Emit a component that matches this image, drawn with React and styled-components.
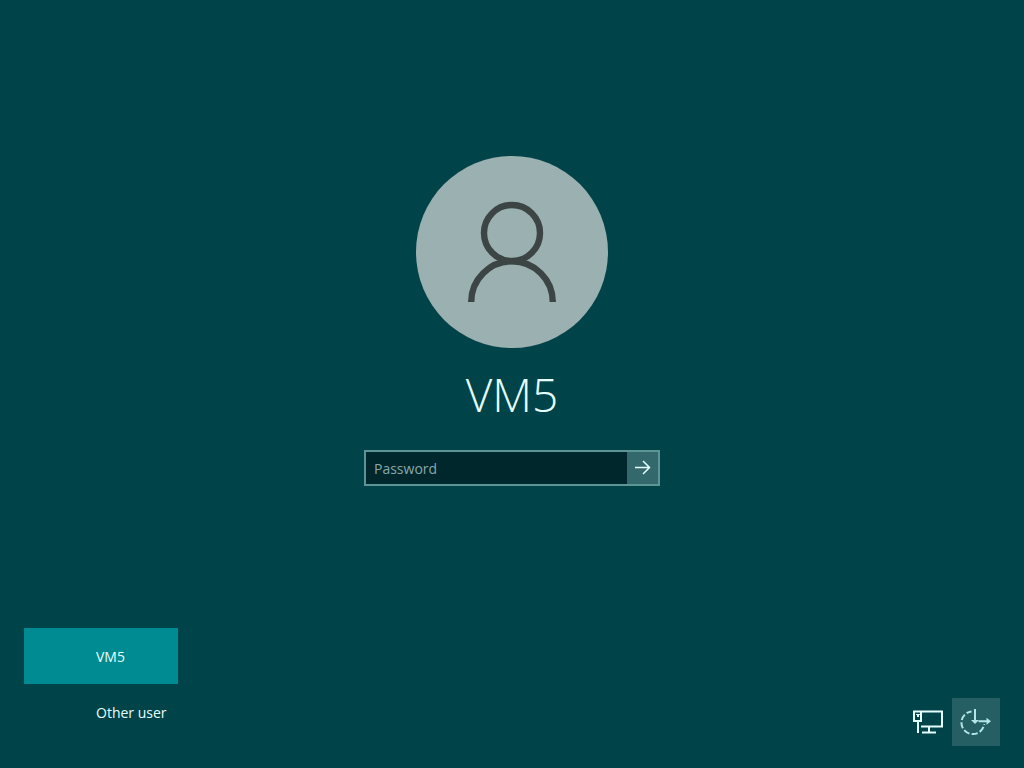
import React, { useState } from 'react';
import styled, { createGlobalStyle } from 'styled-components'

const users = ['VM5', 'Other user'];

export default function App() {
    const [current, setCurrent] = useState(users[0]);

    return (
        <Screen>
            <GlobalStyle />
            <SignIn>
                <Avatar>
                    <UserIcon />
                </Avatar>
                <UserName>{current}</UserName>
                <PasswordForm onSubmit={(e) => e.preventDefault()}>
                    <PasswordInput type="password" placeholder="Password" aria-label="Password" />
                    <SubmitButton type="submit" aria-label="Submit">
                        <ArrowIcon />
                    </SubmitButton>
                </PasswordForm>
            </SignIn>
            <Footer>
                <UserList>
                    {users.map((user) => (
                        <UserButton
                            key={user}
                            type="button"
                            $active={user === current}
                            onClick={() => setCurrent(user)}
                        >
                            {user}
                        </UserButton>
                    ))}
                </UserList>
                <Tray>
                    <TrayButton type="button" aria-label="Network">
                        <NetworkIcon />
                    </TrayButton>
                    <TrayButton type="button" aria-label="Ease of access" $active>
                        <EaseIcon />
                    </TrayButton>
                </Tray>
            </Footer>
        </Screen>
    )
}

const UserIcon = () => (
    <svg width="96" height="104" viewBox="0 0 96 104" fill="none" stroke="#3c4444" strokeWidth="6.4">
        <circle cx="48" cy="33" r="28" />
        <path d="M7.200 102A40.800 40.800 0 0 1 88.800 102" />
    </svg>
)

const ArrowIcon = () => (
    <svg width="18" height="18" viewBox="0 0 18 18" fill="none" stroke="#e6ffff" strokeWidth="1.500">
        <path d="M1 8.500H15.500M9 2L15.500 8.500L9 15" />
    </svg>
)

const NetworkIcon = () => (
    <svg width="32" height="32" viewBox="0 0 32 32" fill="none" stroke="#e6ffff" strokeWidth="2">
        <path d="M1 5.500H30V20.500H9" />
        <path d="M2 5V15H9V5M6 15V27" />
        <path d="M4 8H8V9H7V11H5V9H4Z" fill="#e6ffff" stroke="none" />
        <path d="M17 20.500V26M10 26.500H24" />
    </svg>
)

const EaseIcon = () => (
    <svg width="32" height="32" viewBox="0 0 32 32" fill="none" stroke="#b4e6e8" strokeWidth="2">
        <path d="M11.500 5.400A11.400 11.400 0 1 0 24.200 18" strokeDasharray="6.200 2.300" strokeDashoffset="1" />
        <path d="M15 3V15M18.500 15.300H29" />
        <path d="M11 14H19L15 18ZM26.500 11.800V18.800L31 15.300Z" fill="#b4e6e8" stroke="none" />
    </svg>
)

const GlobalStyle = createGlobalStyle`
    *{
        box-sizing:border-box;
    }
    body{
        margin:0;
        background:#004348;
        font-family:"Open Sans", "Noto Sans", sans-serif;
    }
    button, input{
        font-family:inherit;
        border:0;
        border-radius:0;
    }
    svg{
        display:block;
    }
`;
const Screen = styled.div`
    min-height:100vh;
    display:flex;
    flex-direction:column;
    color:#fff;
`;
const SignIn = styled.main`
    flex:1;
    display:flex;
    flex-direction:column;
    align-items:center;
    padding:156px 24px 24px;
`;
const Avatar = styled.div`
    width:192px;
    height:192px;
    display:flex;
    align-items:center;
    justify-content:center;
    border-radius:50%;
    background:#9bb0b1;
`;
const UserName = styled.h1`
    margin:14px 0 24px;
    font-size:46px;
    line-height:64px;
    font-weight:300;
    color:#e6ffff;
`;
const PasswordForm = styled.form`
    display:flex;
    width:100%;
    max-width:296px;
    height:36px;
    border:2px solid #5d9596;
`;
const PasswordInput = styled.input`
    flex:1;
    min-width:0;
    padding:0 8px;
    background:#00272b;
    color:#fff;
    font-size:14px;
    outline:none;
    &::placeholder{
        color:#87a9ab;
        opacity:1;
    }
`;
const SubmitButton = styled.button`
    width:31px;
    padding:0;
    display:flex;
    align-items:center;
    justify-content:center;
    background:#33696d;
`;
const Footer = styled.footer`
    display:flex;
    align-items:flex-end;
    justify-content:space-between;
    padding:0 24px 22px;
`;
const UserList = styled.div`
    display:flex;
    flex-direction:column;
    padding-bottom:6px;
`;
const UserButton = styled.button`
    width:154px;
    height:56px;
    padding:0 0 0 72px;
    text-align:left;
    white-space:nowrap;
    font-size:14px;
    color:#e6ffff;
    background:${({ $active }) => $active ? '#008a91' : 'transparent'};
`;
const Tray = styled.div`
    display:flex;
`;
const TrayButton = styled.button`
    width:48px;
    height:48px;
    padding:0;
    display:flex;
    align-items:center;
    justify-content:center;
    background:${({ $active }) => $active ? '#265f63' : 'transparent'};
`;
